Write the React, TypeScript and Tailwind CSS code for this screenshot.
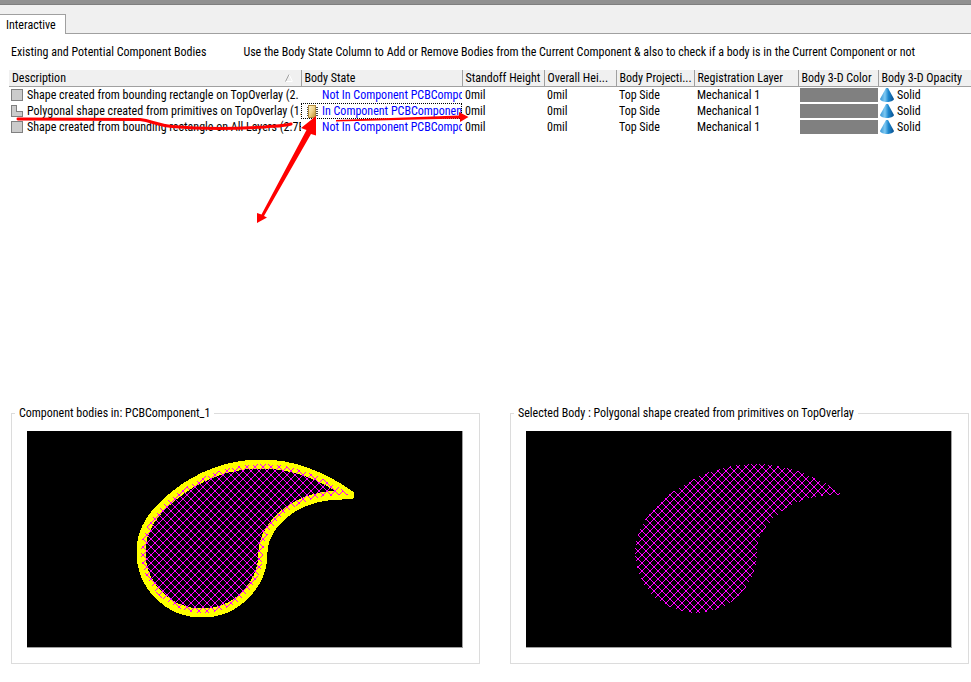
import { useState } from 'react';

type Body = {
  id: number;
  description: string;
  outline: 'rect' | 'poly';
  state: string;
  inComponent: boolean;
};

const bodies: Body[] = [
  { id: 1, description: 'Shape created from bounding rectangle on TopOverlay (2.', outline: 'rect', state: 'Not In Component PCBCompc', inComponent: false },
  { id: 2, description: 'Polygonal shape created from primitives on TopOverlay (1.', outline: 'poly', state: 'In Component PCBComponen', inComponent: true },
  { id: 3, description: 'Shape created from bounding rectangle on All Layers (2.7E', outline: 'rect', state: 'Not In Component PCBCompc', inComponent: false },
];

const columns = [
  { label: 'Body State', width: 'w-[161px]' },
  { label: 'Standoff Height', width: 'w-[82px]' },
  { label: 'Overall Hei...', width: 'w-[72px]' },
  { label: 'Body Projecti...', width: 'w-[78px]' },
  { label: 'Registration Layer', width: 'w-[104px]' },
  { label: 'Body 3-D Color', width: 'w-[80px]' },
  { label: 'Body 3-D Opacity', width: 'w-[93px]' },
];

const BODY_PATH =
  'M114 121C114 99 125 82 149 63C176 42 205 33 235 33C265 33 293 43 323 64C295 63 276 69 261 80C245 92 236 107 236 121A61 61 0 0 1 175 182A61 61 0 0 1 114 121Z';

const HATCH = [0, 1, 2, 3, 4, 5, 6, 7];

function OutlineIcon({ kind }: { kind: Body['outline'] }) {
  return (
    <svg width="12" height="12" className="shrink-0" shapeRendering="crispEdges">
      <path
        d={kind === 'rect' ? 'M.5 .5h11v11H.5z' : 'M.5 .5h5v6h6v5H.5z'}
        fill="#cbcbcb"
        stroke="#808080"
      />
    </svg>
  );
}

function ChipIcon() {
  return (
    <svg width="12" height="14" className="shrink-0">
      <defs>
        <linearGradient id="chip" x1="0" y1="0" x2="1" y2="1">
          <stop offset="0" stopColor="#fff6cf" />
          <stop offset="0.5" stopColor="#f0d288" />
          <stop offset="1" stopColor="#b98a2c" />
        </linearGradient>
      </defs>
      <path d="M1 3.5h11M1 5.5h11M1 7.5h11M1 9.5h11M1 11.5h11" stroke="#4b4b4b" shapeRendering="crispEdges" />
      <rect x="2.5" y="1.5" width="7" height="12" fill="url(#chip)" stroke="#b08a3c" />
    </svg>
  );
}

function ConeIcon() {
  return (
    <svg width="14" height="16" className="shrink-0">
      <defs>
        <linearGradient id="cone" x1="0" x2="1">
          <stop offset="0" stopColor="#3a97d6" />
          <stop offset="0.35" stopColor="#7cc8f2" />
          <stop offset="0.6" stopColor="#1e88cf" />
          <stop offset="1" stopColor="#0a4f8c" />
        </linearGradient>
      </defs>
      <path d="M6 1L0 12C1 16 13 16 14 12L8 1Z" fill="url(#cone)" />
    </svg>
  );
}

function Preview({ id, shift, outlined }: { id: string; shift: number; outlined?: boolean }) {
  return (
    <div className="mt-[10px] mr-4 mb-[15px] ml-[15px] border-r border-b border-[#a0a0a0] bg-black">
      <svg className="block h-[216px] w-full" shapeRendering="crispEdges" role="img" aria-label="Body outline">
        <defs>
          {/* the pattern moves with the path, so push it back onto the same grid */}
          <pattern id={id} x={-shift} width="8" height="8" patternUnits="userSpaceOnUse">
            {HATCH.map((i) => (
              <path key={i} d={`M${i} ${i}h1v1h-1zM${i} ${7 - i}h1v1h-1z`} fill="#f0f" />
            ))}
          </pattern>
        </defs>
        <g transform={`translate(${shift} 0)`}>
          {outlined && <path d={BODY_PATH} fill="#000" stroke="#ff0" strokeWidth="9" strokeLinejoin="round" />}
          <path d={BODY_PATH} fill={`url(#${id})`} />
        </g>
      </svg>
    </div>
  );
}

function Annotations() {
  return (
    <svg width="480" height="230" className="pointer-events-none absolute top-0 left-0" aria-hidden="true">
      <g fill="#f00">
        <path d="M18 119L140 119.500C152 121 156 125 172 126.500C200 129 240 128.500 265 127C276 126 284 126 291 124" fill="none" stroke="#f00" strokeWidth="3" strokeLinecap="round" />
        <path d="M316 116L301 128L306.500 130L261.500 214.500L257 213V223L267 217.500L264 216L311 134L316 135.500Z" />
        <path d="M336 120L459 115.500V112L468.500 117L460 122V118.500L336 121.500Z" />
      </g>
    </svg>
  );
}

export default function App() {
  const [selected, setSelected] = useState(2);

  return (
    <div className="relative flex min-h-screen flex-col bg-white font-['Roboto_Condensed',Lato,'Liberation_Sans',sans-serif] text-[12px] leading-4 text-black">
      <div className="h-[5px] border-b border-[#7f7f7f] bg-[#919191]" />

      {/* Tabs */}
      <div className="flex h-[29px] items-end border-b border-[#a0a0a0] bg-[#f0f0f0]" role="tablist">
        <button role="tab" aria-selected="true" className="-mb-px h-5 border-t border-r border-[#a0a0a0] bg-white pr-[9px] pl-[6px]">
          Interactive
        </button>
      </div>

      <div className="flex gap-[37px] pt-[10px] pl-[11px] whitespace-nowrap">
        <span>Existing and Potential Component Bodies</span>
        <span>
          Use the Body State Column to Add or Remove Bodies from the Current Component &amp; also to check if a body is in the Current Component or not
        </span>
      </div>

      {/* Body list */}
      <div className="grow pt-[10px] pl-[9px]">
        <table className="w-full table-fixed border-collapse whitespace-nowrap">
          <thead>
            <tr className="h-4 border-b border-[#a0a0a0] bg-[#f0f0f0] text-left">
              <th className="overflow-hidden p-0 pl-[3px] font-normal">
                <span className="flex items-center justify-between pr-2">
                  Description
                  <svg width="8" height="8">
                    <path d="M7 7.500H1" stroke="#fff" />
                    <path d="M4 .5L7.500 7.500" stroke="#fff" />
                    <path d="M.5 7.500L4 .5" stroke="#a0a0a0" />
                  </svg>
                </span>
              </th>
              {columns.map((col) => (
                <th key={col.label} className={`${col.width} overflow-hidden border-l border-[#a0a0a0] p-0 pl-[3px] font-normal`}>
                  {col.label}
                </th>
              ))}
            </tr>
          </thead>
          <tbody>
            {bodies.map((body) => (
              <tr key={body.id} className="h-4" onClick={() => setSelected(body.id)}>
                <td className="overflow-hidden p-0 pl-[2px]">
                  <span className="flex items-center gap-1">
                    <OutlineIcon kind={body.outline} />
                    {body.description}
                  </span>
                </td>
                <td className={`overflow-hidden p-0 ${selected === body.id ? 'outline-1 -outline-offset-1 outline-dotted outline-black' : ''}`}>
                  <span className="flex h-4 items-center gap-1 pl-[5px] text-[#0000ff]">
                    {body.inComponent ? <ChipIcon /> : <span className="w-3 shrink-0" />}
                    {body.state}
                  </span>
                </td>
                <td className="p-0 pl-[3px]">0mil</td>
                <td className="p-0 pl-[3px]">0mil</td>
                <td className="p-0 pl-[3px]">Top Side</td>
                <td className="p-0 pl-[3px]">Mechanical 1</td>
                <td className="p-0 pl-[2px]">
                  <div className="h-[14px] bg-[#808080]" />
                </td>
                <td className="p-0 pl-[2px]">
                  <span className="flex h-4 items-center gap-[3px]">
                    <ConeIcon />
                    Solid
                  </span>
                </td>
              </tr>
            ))}
          </tbody>
        </table>
      </div>

      {/* Previews */}
      <div className="grid grid-cols-[469fr_459fr] gap-[30px] pr-[2px] pb-[18px] pl-[11px]">
        <fieldset className="min-w-0 border border-[#dcdcdc]">
          <legend className="ml-[3px] px-1">Component bodies in: PCBComponent_1</legend>
          <Preview id="component" shift={0} outlined />
        </fieldset>
        <fieldset className="min-w-0 border border-[#dcdcdc]">
          <legend className="ml-[3px] px-1">Selected Body : Polygonal shape created from primitives on TopOverlay</legend>
          <Preview id="selected" shift={-5} />
        </fieldset>
      </div>

      <Annotations />
    </div>
  );
}
